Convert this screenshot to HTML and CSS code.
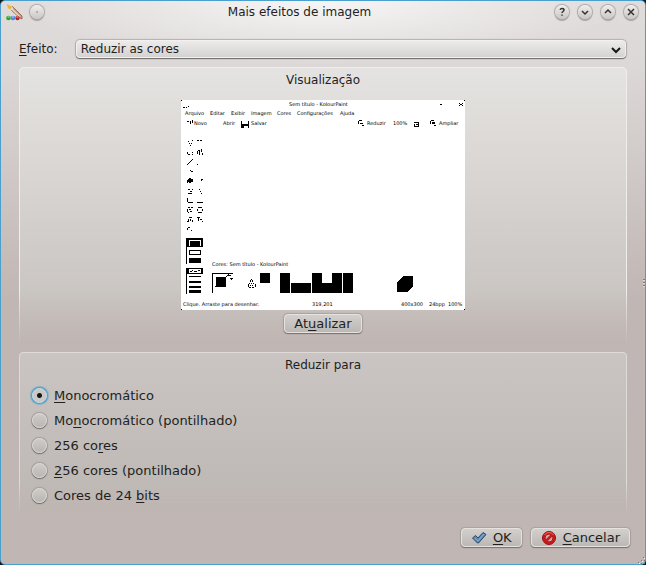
FILE: index.html
```html
<!DOCTYPE html>
<html lang="pt-BR">
<head>
<meta charset="utf-8">
<meta name="viewport" content="width=device-width, initial-scale=1">
<title>Mais efeitos de imagem</title>
<link rel="stylesheet" href="styles.css">
</head>
<body>
<main class="window">
  <header class="titlebar">
    <div class="title-side">
      <svg class="app-icon" width="17" height="17" viewBox="0 0 17 17" aria-hidden="true">
        <path d="M4 5 6.500 2.500 16 12v3l-2-1Z" fill="#c49a78" stroke="#86604a" stroke-width=".8"/>
        <path d="m6 5 8 8" stroke="#f0dcc8" stroke-width="1.200"/>
        <path d="M1 0 6.500 3 4.500 6Q1 4 1 0Z" fill="#f1b632"/>
        <path d="m6 3-2 2.500 1.500 1L7.500 4Z" fill="#ddd"/>
        <circle cx="2.500" cy="14" r="2.300" fill="#25a820"/>
        <circle cx="7" cy="14" r="2.300" fill="#5485df"/>
        <circle cx="11.500" cy="14" r="2.200" fill="#b92026"/>
        <path d="M1.500 13h2M6 13h2M10.500 13h2" stroke="#dceeff" stroke-width=".8"/>
      </svg>
      <button class="round" type="button" aria-label="Fixar"><svg width="14" height="14" viewBox="0 0 14 14"><circle class="dot" cx="7" cy="7" r=".7"/></svg></button>
    </div>
    <h1>Mais efeitos de imagem</h1>
    <div class="title-side controls">
      <button class="round" type="button" aria-label="Ajuda"><svg width="14" height="14" viewBox="0 0 14 14"><path d="M5 4.800Q5.500 3.500 7 3.500q2 0 2 1.500 0 .8-1 1.500T7 8M7 9.500v1.300"/></svg></button>
      <button class="round" type="button" aria-label="Minimizar"><svg width="14" height="14" viewBox="0 0 14 14"><path d="m4 6 3 3 3-3"/></svg></button>
      <button class="round" type="button" aria-label="Maximizar"><svg width="14" height="14" viewBox="0 0 14 14"><path d="m4 8 3-3 3 3"/></svg></button>
      <button class="round" type="button" aria-label="Fechar"><svg width="14" height="14" viewBox="0 0 14 14"><path d="m4 4 6 6m0-6-6 6"/></svg></button>
    </div>
  </header>

  <form class="content">
    <div class="effect-row">
      <label for="effect"><u>E</u>feito:</label>
      <div class="select-box">
        <select id="effect"><option>Reduzir as cores</option></select>
        <svg class="arrow" width="10" height="7" viewBox="0 0 10 7" aria-hidden="true"><path d="m1 1 4 4 4-4"/></svg>
      </div>
    </div>

    <section class="group preview-group">
      <h2>Visualização</h2>
      <svg class="preview" width="284" height="210" viewBox="0 0 284 210" shape-rendering="crispEdges" role="img" aria-label="Visualização da imagem">
        <path fill="#fff" d="M0 0h284v210H0z"/>
        <path d="M0 0h1v1H0zM283 0h1v1h-1zM0 209h1v1H0zM283 209h1v1h-1zM2 7h2v1H2zM5 7h1v1H5zM7 6h1v1H7zM259 4h2v1h-2z"/>
        <g class="tiny">
          <text x="108" y="6">Sem título - KolourPaint</text>
          <text x="4" y="15">Arquivo</text><text x="29" y="15">Editar</text><text x="50" y="15">Exibir</text><text x="70" y="15">Imagem</text><text x="96" y="15">Cores</text><text x="116" y="15">Configurações</text><text x="159" y="15">Ajuda</text>
          <text x="13" y="25">Novo</text><text x="42" y="25">Abrir</text><text x="70" y="25">Salvar</text>
          <text x="186" y="25">Reduzir</text><text x="212" y="25">100%</text><text x="258" y="25">Ampliar</text>
          <text x="31" y="166">Cores: Sem título - KolourPaint</text>
          <text x="2" y="206">Clique. Arraste para desenhar.</text><text x="131" y="206">319,201</text><text x="220" y="206">400x300</text><text x="248" y="206">24bpp</text><text x="267" y="206">100%</text>
        </g>
        <path d="M60 21h1v3h6v-3h1v7h-1v-2h-4v2h-3zM6 21h2v1H6zM9 21h1v3H9zM11 20h1v3h-1z"/>
        <path d="M278 3h1v1h-1zM281 3h1v1h-1zM279 4h2v1h-2zM278 5h1v1h-1zM281 5h1v1h-1zM178 20h3v1h-3zM177 21h1v3h-1zM179 23h3v1h-3zM181 25h2v1h-2zM233 22h5v1h-5zM237 23h1v4h-1zM233 24h1v3h-1zM234 26h3v1h-3zM235 24h2v1h-2zM250 20h3v1h-3zM249 21h1v3h-1zM251 22h3v2h-3zM253 25h2v1h-2z"/>
        <path d="M7 41h1v1H7zM11 40h1v1h-1zM8 43h1v1H8zM10 43h1v1h-1zM9 45h1v1H9zM16 40h2v1h-2zM19 40h2v1h-2zM6 52h1v2H6zM7 54h2v1H7zM11 52h1v1h-1zM11 54h1v1h-1zM16 51h1v3h-1zM17 50h2v1h-2zM18 51h1v4h-1zM20 49h1v3h-1zM21 53h1v2h-1z"/>
        <path d="M6 64h1v1H6zM7 63h1v1H7zM8 62h1v1H8zM9 61h1v1H9zM10 60h1v1h-1zM11 59h1v1h-1zM16 64h1v1h-1zM9 70h1v1H9zM10 71h2v1h-2zM7 79h5v3H7zM8 78h2v5H8zM6 80h1v3H6zM20 79h2v1h-2zM20 80h1v1h-1zM7 89h2v1H7zM11 89h1v1h-1zM9 91h2v1H9zM7 93h4v1H7zM18 89h1v1h-1zM19 91h1v1h-1zM20 93h1v1h-1z"/>
        <path d="M6 98h1v4H6zM7 102h5v1H7zM16 102h6v1h-6zM7 107h2v1H7zM6 109h1v3H6zM8 109h2v1H8zM10 107h2v1h-2zM9 111h2v1H9zM7 112h1v1H7zM17 107h4v1h-4zM16 109h1v2h-1zM21 109h1v2h-1zM17 112h4v1h-4zM8 117h3v1H8zM7 119h1v2H7zM9 119h1v2H9zM6 121h2v1H6zM11 120h1v2h-1zM16 117h3v1h-3zM17 118h1v3h-1zM19 119h2v1h-2zM21 121h1v1h-1zM7 127h2v1H7zM6 128h1v2H6zM10 130h1v1h-1z"/>
        <path d="M5 138h17v9H6v17H5zM8 158h12v5H8zM5 168h17v6H6v20H5zM8 176h12v1H8zM8 181h12v2H8zM8 186h12v2H8zM8 190h12v3H8z"/>
        <path d="M8 140h12v6h-1v-5H9v5H8zM8 169h12v4H8z" fill="#fff"/>
        <path d="M9 171h2v1H9zM11 170h1v1h-1zM13 171h3v1h-3zM17 170h2v1h-2z"/>
        <path d="M8 150h12v5H8zM9 151v3h10v-3z" fill-rule="evenodd"/>
        <path d="M31 173h21v1H32v19h-1zM35 177h10v10H35zM34 186h1v1h-1zM79 173h10v10H79zM99 173h10v20H99zM110 183h20v10h-20zM131 173h10v10h10v-10h10v20h-30zM162 173h10v20h-10zM222 176h10v10l-6 6h-10v-10z"/>
        <path d="M45 176h1v1h-1zM46 175h4v1h-4zM47 174h1v1h-1zM49 178h3v1h-3zM50 179h1v1h-1zM70 179h1v1h-1zM69 180h1v2h-1zM71 180h1v2h-1zM68 183h1v1h-1zM70 183h1v1h-1zM72 183h1v1h-1zM67 184h1v3h-1zM69 185h1v1h-1zM71 185h1v1h-1zM74 184h1v3h-1zM68 187h2v1h-2zM71 187h2v1h-2z"/>
      </svg>
      <button class="button" type="button"><span>At<u>u</u>alizar</span></button>
    </section>

    <fieldset class="group choices">
      <legend>Reduzir para</legend>
      <label><input type="radio" name="depth" checked><span><u>M</u>onocromático</span></label>
      <label><input type="radio" name="depth"><span>Mo<u>n</u>ocromático (pontilhado)</span></label>
      <label><input type="radio" name="depth"><span>256 co<u>r</u>es</span></label>
      <label><input type="radio" name="depth"><span><u>2</u>56 cores (pontilhado)</span></label>
      <label><input type="radio" name="depth"><span>Cores de 24 <u>b</u>its</span></label>
    </fieldset>

    <footer class="actions">
      <button class="button" type="submit">
        <svg width="16" height="16" viewBox="0 0 16 16" aria-hidden="true"><path d="m1.500 8 3-2.500L7 8l5-5.500L15 4.500 7.500 13h-1Z" fill="#6189b5" stroke="#294768"/><path d="m3.500 8 3.500 3 6-7" fill="none" stroke="#8eadcd"/></svg>
        <span><u>O</u>K</span>
      </button>
      <button class="button" type="button">
        <svg width="16" height="16" viewBox="0 0 16 16" aria-hidden="true"><circle cx="8" cy="8" r="6.500" fill="#c71b1c" stroke="#9d0e12"/><circle cx="8" cy="8" r="4" fill="#d5aaa6" stroke="#a81517"/><path d="m4.500 11.500 7-7" stroke="#c51d1e" stroke-width="2.500"/><path d="M3.500 5q1.500-2.500 4.500-2.500T12.500 5" fill="none" stroke="#ed6965"/></svg>
        <span><u>C</u>ancelar</span>
      </button>
    </footer>
  </form>
  <span class="edge-grip" aria-hidden="true"></span>
  <svg class="corner-grip" width="7" height="7" viewBox="0 0 7 7" aria-hidden="true"><path d="M5 0h1v1H5zM3 3h1v1H3zM6 3h1v1H6zM0 5h1v1H0zM3 6h1v1H3zM6 6h1v1H6z" fill="#777"/><path d="M6 1h1v1H6zM4 4h1v1H4zM1 6h1v1H1z" fill="#eee"/></svg>
</main>
</body>
</html>
```
FILE: styles.css
```css
* { box-sizing: border-box; }

body {
  margin: 0;
  background: #101b22;
  color: #221f1e;
  font: 13px/16px "DejaVu Sans", sans-serif;
}

.window {
  position: relative;
  display: flex;
  flex-direction: column;
  min-height: 100vh;
  border: 1px solid #4a9fce;
  border-radius: 5px;
  background:
    radial-gradient(ellipse 300px 64px at 50% 0, #f6f5f5, transparent),
    linear-gradient(#e0dcdb 0, #dcd8d7 64px, #c0b6b3 300px);
}

h1, h2, legend { margin: 0; font-size: 12px; font-weight: 400; line-height: 16px; text-align: center; }
button, select { color: inherit; font: inherit; }
u { text-decoration-thickness: 1px; text-underline-offset: 2px; }

.titlebar {
  display: grid;
  grid-template-columns: auto 1fr auto;
  align-items: center;
  height: 22px;
  padding: 0 7px 0 5px;
}
.title-side { display: flex; align-items: center; gap: 7px; }
.controls { gap: 9px; }
.round {
  width: 14px;
  height: 14px;
  padding: 0;
  border: 0;
  border-radius: 50%;
  background: linear-gradient(#f0efee, #c9c6c4);
  box-shadow: 0 0 1px 1px #aaa6a4, 0 2px 1px #a8a3a1;
}
.round svg { display: block; fill: none; stroke: #333; stroke-width: 1.5; }
.round .dot { fill: #666; stroke: none; }

.content { display: flex; flex: 1; flex-direction: column; padding: 17px 18px; }
.effect-row { display: flex; align-items: center; gap: 18px; padding-right: 1px; font-size: 12px; }
.select-box { position: relative; flex: 1; }
select {
  display: block;
  width: 100%;
  height: 18px;
  padding: 0 24px 0 4px;
  appearance: none;
  border: 1px solid #f2f1f0;
  border-radius: 4px;
  background: linear-gradient(#edebea, #d5d3d1);
  box-shadow: 0 1px 1px #706c6a, 0 0 1px 1px #b5b0ae;
}
.arrow { position: absolute; top: 7px; right: 5px; fill: none; stroke: #171717; stroke-width: 2; pointer-events: none; }

.group {
  position: relative;
  z-index: 0;
  margin: 0;
  border: 0;
  border-radius: 4px 4px 0 0;
}
.group::before {
  position: absolute;
  z-index: -1;
  inset: 0;
  border: 1px solid #f0eeed;
  border-bottom: 0;
  border-radius: inherit;
  box-shadow: 1px 0 0 #999491, -1px 0 0 #aba6a4;
  background: linear-gradient(#e5e3e1, #c4bfbb);
  content: "";
  mask-image: linear-gradient(#000 80%, transparent);
  pointer-events: none;
}
.choices.group::before { border-color: #dedbd9; background: linear-gradient(#cac5c2, #bcb7b3); }
.preview-group {
  display: flex;
  flex-direction: column;
  align-items: center;
  min-height: 278px;
  margin-top: 9px;
  padding: 5px 0 12px;
}
.preview { margin-top: 12px; }
.tiny { font: 5px "DejaVu Sans", sans-serif; }

.button {
  display: flex;
  align-items: center;
  justify-content: center;
  height: 19px;
  gap: 6px;
  padding: 0 9px;
  border: 1px solid #e5e2e0;
  border-radius: 4px;
  background: linear-gradient(#d2cfcc, #bbb8b5);
  box-shadow: 0 1px 1px #77716e, 0 0 1px 1px #aaa29f;
}
.preview-group .button { margin-top: 4px; }

.choices { display: flex; flex-direction: column; min-height: 163px; margin-top: 7px; padding: 5px 12px 6px; }
.choices legend { float: left; width: 100%; margin-bottom: 10px; padding: 0; }
.choices label { display: flex; align-items: center; width: fit-content; height: 25px; gap: 6px; }
.choices input {
  width: 15px;
  height: 15px;
  margin: 0 1px;
  appearance: none;
  border: 1px solid #dedbd8;
  border-radius: 50%;
  background: linear-gradient(#cfccc8, #b9b7b3);
  box-shadow: 0 1px 1px #706a67, 0 0 1px 1px #a19b98;
}
.choices input:checked {
  background: radial-gradient(circle, #171717 2px, transparent 3px), #cbc7c4;
  box-shadow: 0 0 1px 1px #3b9fd8, 0 0 1px 2px #8bb4c8;
}

.actions { display: flex; justify-content: flex-end; gap: 9px; margin: auto -3px 0 0; padding-top: 11px; }
.edge-grip { position: absolute; top: 278px; right: 0; width: 2px; height: 8px; background: repeating-linear-gradient(#827d7a 0 1px, #dedbd9 1px 2px, transparent 2px 3px); }
.corner-grip { position: absolute; right: 0; bottom: 0; }
```
